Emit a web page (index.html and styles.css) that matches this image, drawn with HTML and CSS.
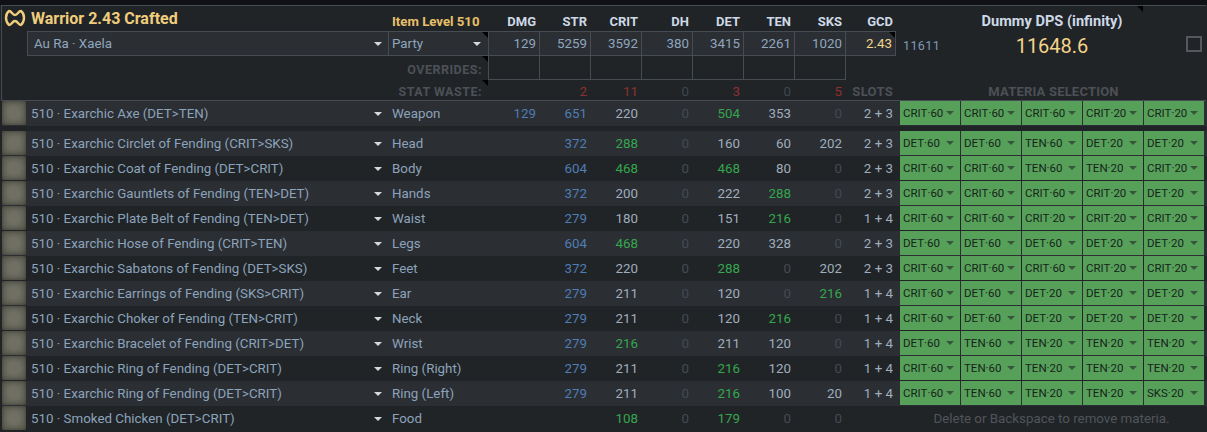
FILE: index.html
```html
<!DOCTYPE html>
<html lang="en">

<head>
    <meta charset="UTF-8">
    <title>Warrior 2.43 Crafted</title>
    <link rel="stylesheet" href="styles.css">
</head>

<body>
    <div class="sheet">
        <div class="head">
            <div class="title-cell">
                <svg class="job-icon" viewBox="0 0 22 18" width="22" height="18">
                    <path d="M5 2C8 2 8 6 11 6S14 2 17 2C21 5 21 12 17 16C14 16 14 12 11 12S8 16 5 16C1 12 1 5 5 2Z" fill="none" stroke="#f0cd7c" stroke-width="2.4" stroke-linejoin="round"/>
                </svg>
                <span class="title">Warrior 2.43 Crafted</span>
            </div>
            <div class="ilvl">Item Level 510</div>
            <div class="stat-name">DMG</div>
            <div class="stat-name">STR</div>
            <div class="stat-name">CRIT</div>
            <div class="stat-name">DH</div>
            <div class="stat-name">DET</div>
            <div class="stat-name">TEN</div>
            <div class="stat-name">SKS</div>
            <div class="stat-name">GCD</div>

            <div class="dps">
                <div class="dps-title">Dummy DPS (infinity)</div>
                <div class="dps-base">11611</div>
                <div class="dps-value">11648.6</div>
                <div class="dps-check"><span class="checkbox"></span></div>
            </div>

            <div class="spacer"></div>
            <div class="box race"><span>Au Ra · Xaela</span><i class="arrow"></i></div>
            <div class="box party corner"><span>Party</span><i class="arrow"></i></div>
            <div class="box num">129</div>
            <div class="box num">5259</div>
            <div class="box num">3592</div>
            <div class="box num">380</div>
            <div class="box num">3415</div>
            <div class="box num">2261</div>
            <div class="box num">1020</div>
            <div class="box num gcd corner">2.43</div>

            <div class="label over-label corner">OVERRIDES:</div>
            <div class="box over"></div>
            <div class="box over"></div>
            <div class="box over"></div>
            <div class="box over"></div>
            <div class="box over"></div>
            <div class="box over"></div>
            <div class="box over"></div>
            <div class="over-end"></div>

            <div class="label corner">STAT WASTE:</div>
            <div class="waste"></div>
            <div class="waste red">2</div>
            <div class="waste red">11</div>
            <div class="waste">0</div>
            <div class="waste red">3</div>
            <div class="waste">0</div>
            <div class="waste red">5</div>
            <div class="waste label-end">SLOTS</div>
            <div class="materia-label">MATERIA SELECTION</div>
        </div>

        <div class="row weapon">
            <div class="icon"></div>
            <div class="name"><span>510 · Exarchic Axe (DET&gt;TEN)</span><i class="arrow"></i></div>
            <div class="slot">Weapon</div>
            <div class="n blue">129</div><div class="n blue">651</div><div class="n">220</div><div class="n zero">0</div><div class="n green">504</div><div class="n">353</div><div class="n zero">0</div><div class="n">2 + 3</div>
            <div class="gap"></div>
            <div class="m">CRIT·60<i></i></div><div class="m">CRIT·60<i></i></div><div class="m">CRIT·60<i></i></div><div class="m">CRIT·20<i></i></div><div class="m">CRIT·20<i></i></div>
        </div>

        <div class="row light">
            <div class="icon"></div>
            <div class="name"><span>510 · Exarchic Circlet of Fending (CRIT&gt;SKS)</span><i class="arrow"></i></div>
            <div class="slot">Head</div>
            <div class="n"></div><div class="n blue">372</div><div class="n green">288</div><div class="n zero">0</div><div class="n">160</div><div class="n">60</div><div class="n">202</div><div class="n">2 + 3</div>
            <div class="gap"></div>
            <div class="m">DET·60<i></i></div><div class="m">DET·60<i></i></div><div class="m">TEN·60<i></i></div><div class="m">DET·20<i></i></div><div class="m">DET·20<i></i></div>
        </div>

        <div class="row">
            <div class="icon"></div>
            <div class="name"><span>510 · Exarchic Coat of Fending (DET&gt;CRIT)</span><i class="arrow"></i></div>
            <div class="slot">Body</div>
            <div class="n"></div><div class="n blue">604</div><div class="n green">468</div><div class="n zero">0</div><div class="n green">468</div><div class="n">80</div><div class="n zero">0</div><div class="n">2 + 3</div>
            <div class="gap"></div>
            <div class="m">CRIT·60<i></i></div><div class="m">CRIT·60<i></i></div><div class="m">TEN·60<i></i></div><div class="m">TEN·20<i></i></div><div class="m">CRIT·20<i></i></div>
        </div>

        <div class="row light">
            <div class="icon"></div>
            <div class="name"><span>510 · Exarchic Gauntlets of Fending (TEN&gt;DET)</span><i class="arrow"></i></div>
            <div class="slot">Hands</div>
            <div class="n"></div><div class="n blue">372</div><div class="n">200</div><div class="n zero">0</div><div class="n">222</div><div class="n green">288</div><div class="n zero">0</div><div class="n">2 + 3</div>
            <div class="gap"></div>
            <div class="m">CRIT·60<i></i></div><div class="m">CRIT·60<i></i></div><div class="m">CRIT·60<i></i></div><div class="m">CRIT·20<i></i></div><div class="m">DET·20<i></i></div>
        </div>

        <div class="row">
            <div class="icon"></div>
            <div class="name"><span>510 · Exarchic Plate Belt of Fending (TEN&gt;DET)</span><i class="arrow"></i></div>
            <div class="slot">Waist</div>
            <div class="n"></div><div class="n blue">279</div><div class="n">180</div><div class="n zero">0</div><div class="n">151</div><div class="n green">216</div><div class="n zero">0</div><div class="n">1 + 4</div>
            <div class="gap"></div>
            <div class="m">CRIT·60<i></i></div><div class="m">CRIT·60<i></i></div><div class="m">CRIT·20<i></i></div><div class="m">CRIT·20<i></i></div><div class="m">CRIT·20<i></i></div>
        </div>

        <div class="row light">
            <div class="icon"></div>
            <div class="name"><span>510 · Exarchic Hose of Fending (CRIT&gt;TEN)</span><i class="arrow"></i></div>
            <div class="slot">Legs</div>
            <div class="n"></div><div class="n blue">604</div><div class="n green">468</div><div class="n zero">0</div><div class="n">220</div><div class="n">328</div><div class="n zero">0</div><div class="n">2 + 3</div>
            <div class="gap"></div>
            <div class="m">DET·60<i></i></div><div class="m">DET·60<i></i></div><div class="m">DET·60<i></i></div><div class="m">DET·20<i></i></div><div class="m">DET·20<i></i></div>
        </div>

        <div class="row">
            <div class="icon"></div>
            <div class="name"><span>510 · Exarchic Sabatons of Fending (DET&gt;SKS)</span><i class="arrow"></i></div>
            <div class="slot">Feet</div>
            <div class="n"></div><div class="n blue">372</div><div class="n">220</div><div class="n zero">0</div><div class="n green">288</div><div class="n zero">0</div><div class="n">202</div><div class="n">2 + 3</div>
            <div class="gap"></div>
            <div class="m">CRIT·60<i></i></div><div class="m">CRIT·60<i></i></div><div class="m">CRIT·60<i></i></div><div class="m">CRIT·20<i></i></div><div class="m">CRIT·20<i></i></div>
        </div>

        <div class="row light">
            <div class="icon"></div>
            <div class="name"><span>510 · Exarchic Earrings of Fending (SKS&gt;CRIT)</span><i class="arrow"></i></div>
            <div class="slot">Ear</div>
            <div class="n"></div><div class="n blue">279</div><div class="n">211</div><div class="n zero">0</div><div class="n">120</div><div class="n zero">0</div><div class="n green">216</div><div class="n">1 + 4</div>
            <div class="gap"></div>
            <div class="m">CRIT·60<i></i></div><div class="m">DET·60<i></i></div><div class="m">DET·20<i></i></div><div class="m">DET·20<i></i></div><div class="m">DET·20<i></i></div>
        </div>

        <div class="row">
            <div class="icon"></div>
            <div class="name"><span>510 · Exarchic Choker of Fending (TEN&gt;CRIT)</span><i class="arrow"></i></div>
            <div class="slot">Neck</div>
            <div class="n"></div><div class="n blue">279</div><div class="n">211</div><div class="n zero">0</div><div class="n">120</div><div class="n green">216</div><div class="n zero">0</div><div class="n">1 + 4</div>
            <div class="gap"></div>
            <div class="m">CRIT·60<i></i></div><div class="m">DET·60<i></i></div><div class="m">DET·20<i></i></div><div class="m">DET·20<i></i></div><div class="m">DET·20<i></i></div>
        </div>

        <div class="row light">
            <div class="icon"></div>
            <div class="name"><span>510 · Exarchic Bracelet of Fending (CRIT&gt;DET)</span><i class="arrow"></i></div>
            <div class="slot">Wrist</div>
            <div class="n"></div><div class="n blue">279</div><div class="n green">216</div><div class="n zero">0</div><div class="n">211</div><div class="n">120</div><div class="n zero">0</div><div class="n">1 + 4</div>
            <div class="gap"></div>
            <div class="m">DET·60<i></i></div><div class="m">TEN·60<i></i></div><div class="m">TEN·20<i></i></div><div class="m">TEN·20<i></i></div><div class="m">TEN·20<i></i></div>
        </div>

        <div class="row">
            <div class="icon"></div>
            <div class="name"><span>510 · Exarchic Ring of Fending (DET&gt;CRIT)</span><i class="arrow"></i></div>
            <div class="slot">Ring (Right)</div>
            <div class="n"></div><div class="n blue">279</div><div class="n">211</div><div class="n zero">0</div><div class="n green">216</div><div class="n">120</div><div class="n zero">0</div><div class="n">1 + 4</div>
            <div class="gap"></div>
            <div class="m">CRIT·60<i></i></div><div class="m">TEN·60<i></i></div><div class="m">TEN·20<i></i></div><div class="m">TEN·20<i></i></div><div class="m">TEN·20<i></i></div>
        </div>

        <div class="row light">
            <div class="icon"></div>
            <div class="name"><span>510 · Exarchic Ring of Fending (DET&gt;CRIT)</span><i class="arrow"></i></div>
            <div class="slot">Ring (Left)</div>
            <div class="n"></div><div class="n blue">279</div><div class="n">211</div><div class="n zero">0</div><div class="n green">216</div><div class="n">100</div><div class="n">20</div><div class="n">1 + 4</div>
            <div class="gap"></div>
            <div class="m">CRIT·60<i></i></div><div class="m">TEN·60<i></i></div><div class="m">TEN·20<i></i></div><div class="m">TEN·20<i></i></div><div class="m">SKS·20<i></i></div>
        </div>

        <div class="row food">
            <div class="icon"></div>
            <div class="name"><span>510 · Smoked Chicken (DET&gt;CRIT)</span><i class="arrow"></i></div>
            <div class="slot">Food</div>
            <div class="n"></div><div class="n"></div><div class="n green">108</div><div class="n zero">0</div><div class="n green">179</div><div class="n zero">0</div><div class="n zero">0</div><div class="n"></div>
            <div class="gap"></div>
            <div class="note">Delete or Backspace to remove materia.</div>
        </div>
    </div>
</body>

</html>
```

FILE: styles.css
```css
* {
    box-sizing: border-box;
}

body {
    margin: 0;
    height: 432px;
    overflow: hidden;
    background: #0f1114;
    font-family: Roboto, "Liberation Sans", sans-serif;
    font-size: 13.33px;
    color: #9fadbd;
}

.sheet {
    margin-top: 5px;
    height: 427px;
    background: #212427;
    --cols: 25px 361px 100px repeat(8, 51px) 4px repeat(5, 61px);
}

/* header block */
.head {
    display: grid;
    grid-template-columns: var(--cols);
    grid-template-rows: 25px 24px 24px 21px;
    margin-left: 1px;
    width: 1205px;
    border: 1px solid #474b52;
    border-right: none;
    background: #212427;
}

.title-cell {
    grid-column: 1 / 3;
    display: flex;
    align-items: center;
    padding: 0 0 1px 2px;
    gap: 5px;
}

.job-icon {
    flex: none;
}

.title {
    font-size: 16px;
    font-weight: 700;
    color: #f0cd7c;
}

.ilvl {
    padding: 8px 0 0 4px;
    font-size: 13.2px;
    font-weight: 700;
    white-space: nowrap;
    color: #e8c06a;
}

.stat-name {
    padding: 8px 3px 0 0;
    font-size: 13px;
    font-weight: 700;
    text-align: right;
    color: #cdd9e6;
}

.dps {
    grid-column: 12 / 18;
    grid-row: 1 / 4;
    display: grid;
    grid-template-columns: 1fr auto 1fr;
    grid-template-rows: 24px auto;
    padding: 0 3px 0 6px;
    justify-items: center;
    position: relative;
}

.dps::after {
    content: "";
    position: absolute;
    top: 0;
    left: 241px;
    border-top: 6px solid #000;
    border-left: 6px solid transparent;
}

.dps-title {
    grid-column: 1 / 4;
    padding-top: 6px;
    font-size: 14.6px;
    font-weight: 700;
    color: #cdd9e6;
}

.dps-base {
    justify-self: start;
    margin-left: 1px;
    padding-top: 8px;
    font-size: 12.5px;
    letter-spacing: 0.4px;
    color: #7c99b8;
}

.dps-value {
    font-size: 20px;
    padding-top: 4px;
    color: #f3d48a;
}

.dps-check {
    justify-self: end;
    padding-top: 6px;
}

.checkbox {
    display: block;
    width: 16px;
    height: 16px;
    border: 2px solid #55585e;
}

.spacer {
    grid-column: 1;
}

.box {
    height: 25px;
    border: 1px solid #474b52;
    border-right: none;
    background: #2b2e33;
    color: #8fa6bd;
    line-height: 23px;
}

.race {
    display: flex;
    justify-content: space-between;
    align-items: center;
    padding: 0 6px 0 6px;
}

.party {
    display: flex;
    justify-content: space-between;
    align-items: center;
    padding: 0 7px 0 3px;
}

.num {
    padding-right: 3px;
    text-align: right;
}

.num.gcd {
    border-right: 1px solid #474b52;
    color: #f3d48a;
}

.over {
    height: 25px;
    background: #212427;
}

.over-end {
    border-left: 1px solid #474b52;
    height: 25px;
}

.label {
    grid-column: 1 / 4;
    padding: 5px 6px 0 0;
    font-size: 12.5px;
    font-weight: 700;
    letter-spacing: 0.5px;
    text-align: right;
    color: #4c5057;
}

.over-label {
    padding-top: 7px;
}

.waste {
    padding: 5px 3px 0 0;
    text-align: right;
    color: #3f4650;
}

.waste.red {
    color: #8f2f2f;
}

.label-end {
    font-size: 13px;
    font-weight: 700;
    letter-spacing: 0.3px;
    color: #4c5057;
}

.materia-label {
    grid-column: 12 / 18;
    padding: 5px 0 0 6px;
    text-align: center;
    font-size: 13px;
    font-weight: 700;
    letter-spacing: 0.2px;
    color: #4c5057;
}

/* black corner mark */
.corner {
    position: relative;
}

.corner::after {
    content: "";
    position: absolute;
    top: 0;
    right: 0;
    border-top: 6px solid #000;
    border-left: 6px solid transparent;
}

.label.corner::after {
    top: 1px;
}

/* gear rows */
.row {
    display: grid;
    grid-template-columns: var(--cols);
    height: 25px;
    margin-left: 2px;
    line-height: 25px;
    background: #212427;
}

.row.light,
.row.weapon {
    background: #2b2e33;
}

.row.weapon {
    margin-bottom: 5px;
}

.icon {
    width: 24px;
    height: 24px;
    border-radius: 2px;
    background: radial-gradient(circle, #706f64 30%, #585749 100%);
    box-shadow: inset 0 0 4px #3f3f38;
}

.name {
    display: flex;
    justify-content: space-between;
    align-items: center;
    padding: 0 6px 0 4px;
    color: #8ba3bb;
}

.slot {
    padding-left: 4px;
    color: #8ba3bb;
}

.n {
    padding-right: 3px;
    text-align: right;
}

.n.blue {
    color: #4f7db5;
}

.n.green {
    color: #35a64d;
}

.n.zero {
    color: #454a52;
}

.arrow {
    flex: none;
    width: 0;
    height: 0;
    border-top: 4px solid #d5d9de;
    border-left: 4px solid transparent;
    border-right: 4px solid transparent;
}

.m {
    display: flex;
    justify-content: space-between;
    align-items: center;
    margin-right: 1px;
    margin-bottom: 1px;
    padding: 0 6px 0 3px;
    font-size: 11.5px;
    line-height: 20px;
    background: #57a05a;
    color: #16241a;
}

.m i {
    width: 0;
    height: 0;
    border-top: 4px solid #37553b;
    border-left: 4px solid transparent;
    border-right: 4px solid transparent;
}

.note {
    grid-column: 13 / 18;
    padding-right: 2px;
    text-align: center;
    color: #50545b;
}
```
